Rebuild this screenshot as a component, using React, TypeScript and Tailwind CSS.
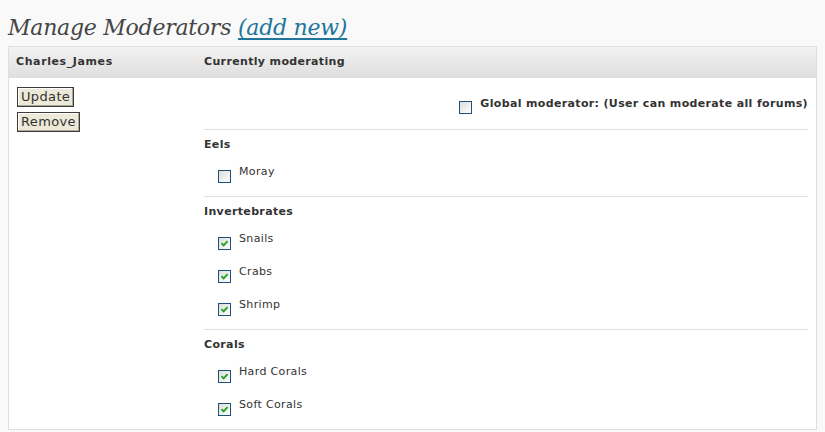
import React from 'react';

interface Forum {
    name: string;
    checked: boolean;
}

interface Group {
    title: string;
    forums: Forum[];
}

const groups: Group[] = [
    { title: 'Eels', forums: [{ name: 'Moray', checked: false }] },
    {
        title: 'Invertebrates',
        forums: [
            { name: 'Snails', checked: true },
            { name: 'Crabs', checked: true },
            { name: 'Shrimp', checked: true }
        ]
    },
    {
        title: 'Corals',
        forums: [
            { name: 'Hard Corals', checked: true },
            { name: 'Soft Corals', checked: true }
        ]
    }
];

const Checkbox: React.FC<{ checked: boolean }> = ({ checked }) => (
    <span className="mt-[7px] flex h-[13px] w-[13px] shrink-0 items-center justify-center border border-[#1c5180] bg-gradient-to-br from-[#dcdcd7] to-[#ffffff]">
        {checked && (
            <svg width="9" height="9" viewBox="0 0 9 9">
                <path d="M1.5 4.2 L3.6 6.4 L7.6 2.2" fill="none" stroke="#21a121" strokeWidth="1.8" />
            </svg>
        )}
    </span>
);

const XpButton: React.FC<{ label: string }> = ({ label }) => (
    <button className="h-[20px] border border-[#3c3c3c] bg-[#ece9d8] px-[3px] text-[13px] leading-[18px] text-[#333] shadow-[inset_-1px_-1px_0_#aca899,inset_1px_1px_0_#fff]">
        {label}
    </button>
);

const App: React.FC = () => {
    return (
        <div className="min-h-[432px] bg-[#f9f9f9] px-2 pt-[14px] text-[#333] font-['DejaVu_Sans',Verdana,sans-serif] text-[11px] tracking-[0.35px]">
            <h2 className="mb-[4px] h-[28px] font-['DejaVu_Serif',Georgia,serif] text-[22px] italic leading-[28px] tracking-[-0.25px] text-[#464646]">
                Manage Moderators{' '}
                <a href="#" className="text-[#21759b] underline underline-offset-[3px]">(add new)</a>
            </h2>

            <div className="border border-[#dfdfdf] bg-white">
                <div className="flex h-[31px] items-center border-b border-[#dfdfdf] bg-gradient-to-b from-[#f2f2f2] to-[#dfdfdf] font-bold">
                    <div className="w-[187px] pl-[7px] tracking-[0.6px]">Charles_James</div>
                    <div className="pl-[8px]">Currently moderating</div>
                </div>

                <div className="flex">
                    <div className="flex w-[187px] flex-col items-start gap-[5px] pl-[8px] pt-[9px]">
                        <XpButton label="Update" />
                        <XpButton label="Remove" />
                    </div>

                    <div className="flex-1 pl-[8px] pr-[8px]">
                        <div className="flex h-[51px] items-center justify-end gap-[8px] pt-[1px]">
                            <Checkbox checked={false} />
                            <span className="font-bold">Global moderator: (User can moderate all forums)</span>
                        </div>

                        {groups.map((group) => (
                            <div key={group.title} className="border-t border-[#dfdfdf] pb-[7px] pt-[8px]">
                                <div className="h-[14px] font-bold leading-[14px]">{group.title}</div>
                                <div className="mt-[4px] pl-[14px]">
                                    {group.forums.map((forum) => (
                                        <div key={forum.name} className="flex h-[33px] items-center gap-[8px]">
                                            <Checkbox checked={forum.checked} />
                                            <span>{forum.name}</span>
                                        </div>
                                    ))}
                                </div>
                            </div>
                        ))}
                    </div>
                </div>
            </div>
        </div>
    );
};

export default App;
